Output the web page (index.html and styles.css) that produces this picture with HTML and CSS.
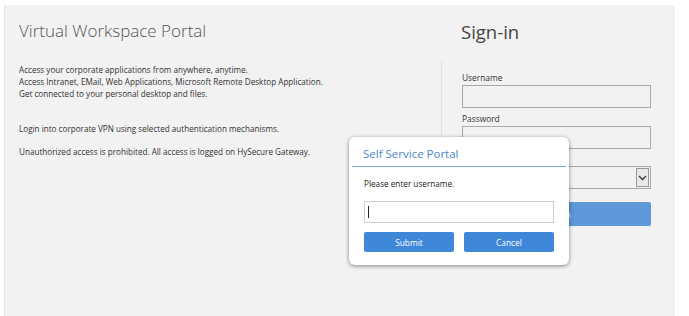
FILE: index.html
```html
<!DOCTYPE html>
<html>
<head>
<meta charset="utf-8">
<link rel="stylesheet" href="styles.css">
</head>
<body>
<div class="panel">
  <div class="header">
    <h1 class="title">Virtual Workspace Portal</h1>
    <h2 class="signin-title">Sign-in</h2>
  </div>
  <div class="body">
    <div class="info">
      <p class="lines">Access your corporate applications from anywhere, anytime.<br>Access Intranet, EMail, Web Applications, Microsoft Remote Desktop Application.<br>Get connected to your personal desktop and files.</p>
      <p class="vpn">Login into corporate VPN using selected authentication mechanisms.</p>
      <p class="warn">Unauthorized access is prohibited. All access is logged on HySecure Gateway.</p>
    </div>
    <div class="form">
      <label class="label">Username</label>
      <div class="field"></div>
      <label class="label">Password</label>
      <div class="field"></div>
      <div class="select"><span class="arrow"><svg width="9" height="6" viewBox="0 0 9 6"><path d="M1 1l3.5 3.5L8 1" fill="none" stroke="#333" stroke-width="1.3"/></svg></span></div>
      <div class="btn-main">Sign-in</div>
    </div>
  </div>
  <div class="modal">
    <div class="modal-title">Self Service Portal</div>
    <div class="modal-body">
      <p class="prompt">Please enter username.</p>
      <div class="modal-input"><span class="caret"></span></div>
      <div class="modal-buttons">
        <div class="mbtn">Submit</div>
        <div class="mbtn">Cancel</div>
      </div>
    </div>
  </div>
</div>
</body>
</html>
```
FILE: styles.css
```css
html, body { margin: 0; padding: 0; background: #fff; }
body { font-family: "Open Sans", "Noto Sans", sans-serif; color: #333; }
.panel {
  position: relative;
  margin: 5px 0 0 4px;
  width: 671px;
  height: 311px;
  background: #f2f2f2;
  border-left: 1px solid #e6e6e6;
  box-sizing: border-box;
}
.header { display: flex; }
.title {
  margin: 0;
  width: 442px;
  padding: 13px 0 0 14px;
  box-sizing: border-box;
  font-weight: 300;
  font-size: 17px;
  line-height: 26px;
  color: #555;
}
.signin-title {
  margin: 0;
  padding: 14px 0 0 14px;
  font-weight: 400;
  font-size: 18.5px;
  line-height: 26px;
  color: #444;
}
.body { display: flex; margin-top: 16px; }
.info {
  width: 436px;
  padding-left: 14px;
  box-sizing: border-box;
  font-size: 8.15px;
  color: #333;
}
.info p { margin: 0; line-height: 12px; }
.lines { padding-top: 3px; }
.vpn { margin-top: 23px !important; }
.warn { margin-top: 11px !important; }
.form {
  border-left: 1px solid #e2e2e2;
  padding: 11px 0 0 20px;
  width: 210px;
  height: 190px;
}
.label { display: block; font-size: 8.4px; color: #333; line-height: 12px; }
.field {
  width: 189px;
  height: 23px;
  border: 1px solid #a9a9a9;
  box-sizing: border-box;
  background: #f2f2f2;
  margin: 1px 0 5px;
}
.select {
  margin-top: 17px;
  width: 189px;
  height: 23px;
  border: 1px solid #a9a9a9;
  box-sizing: border-box;
  display: flex;
  justify-content: flex-end;
  align-items: center;
  padding-right: 1px;
}
.arrow {
  width: 13px;
  height: 19px;
  border: 1px solid #999;
  box-sizing: border-box;
  background: #e8e8e8;
  display: flex;
  align-items: center;
  justify-content: center;
}
.btn-main {
  margin-top: 13px;
  width: 189px;
  height: 24px;
  border-radius: 2px;
  background: #5d99d8;
  color: #fff;
  font-size: 9px;
  display: flex;
  align-items: center;
  justify-content: center;
}
.modal {
  position: absolute;
  left: 344px;
  top: 132px;
  width: 220px;
  height: 128px;
  background: #fff;
  border-radius: 6px;
  box-shadow: 0 1px 4px rgba(0,0,0,0.45);
  box-sizing: border-box;
  padding: 0 3px;
}
.modal-title {
  color: #4a86c8;
  font-size: 11.5px;
  line-height: 16px;
  padding: 9px 0 4px 11px;
  border-bottom: 1px solid #7ea9d8;
}
.modal-body { padding: 0 12px; }
.prompt { margin: 11px 0 0; font-size: 8.2px; line-height: 12px; color: #222; }
.modal-input {
  margin-top: 11px;
  height: 22px;
  border: 1px solid #ccc;
  box-sizing: border-box;
  display: flex;
  align-items: center;
  padding-left: 3px;
}
.caret { width: 1px; height: 12px; background: #222; }
.modal-buttons { display: flex; gap: 10px; margin-top: 9px; }
.mbtn {
  flex: 1;
  height: 20px;
  border-radius: 2px;
  background: #3f87d9;
  color: #fff;
  font-size: 8.4px;
  display: flex;
  align-items: center;
  justify-content: center;
}
```
